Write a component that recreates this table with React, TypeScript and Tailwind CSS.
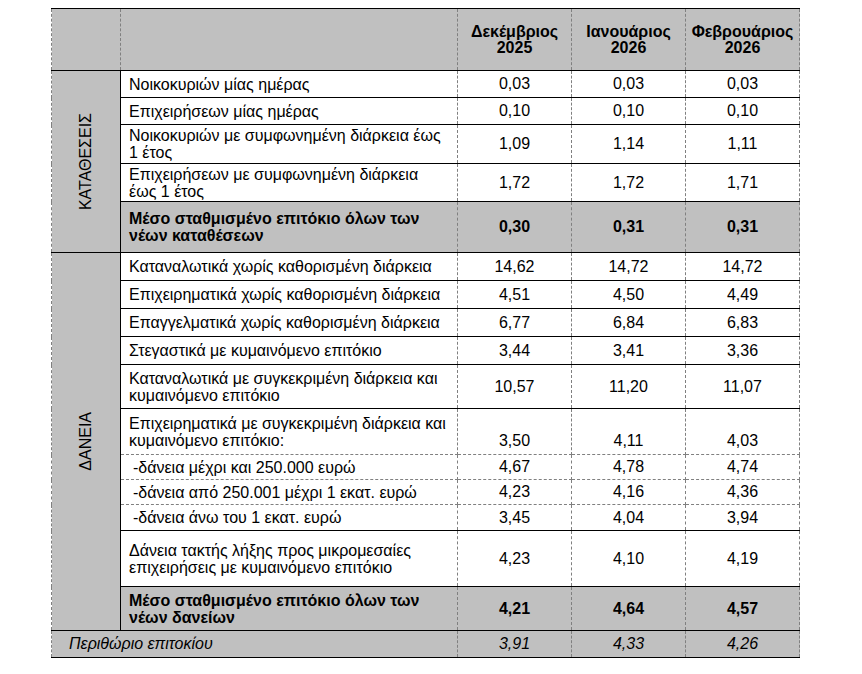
const font = { fontFamily: '"Liberation Sans", Arial, sans-serif' };

type Row = {
  label: string[];
  values: [string, string, string];
  h: number;
  kind?: "bold" | "sub" | "bottomVal";
  dashedTop?: boolean;
};

const deposits: Row[] = [
  { label: ["Νοικοκυριών μίας ημέρας"], values: ["0,03", "0,03", "0,03"], h: 27 },
  { label: ["Επιχειρήσεων μίας ημέρας"], values: ["0,10", "0,10", "0,10"], h: 27 },
  { label: ["Νοικοκυριών με συμφωνημένη διάρκεια έως", "1 έτος"], values: ["1,09", "1,14", "1,11"], h: 39 },
  { label: ["Επιχειρήσεων με συμφωνημένη διάρκεια", "έως 1 έτος"], values: ["1,72", "1,72", "1,71"], h: 38 },
  { label: ["Μέσο σταθμισμένο επιτόκιο όλων των", "νέων καταθέσεων"], values: ["0,30", "0,31", "0,31"], h: 51, kind: "bold" },
];

const loans: Row[] = [
  { label: ["Καταναλωτικά χωρίς καθορισμένη διάρκεια"], values: ["14,62", "14,72", "14,72"], h: 28 },
  { label: ["Επιχειρηματικά χωρίς καθορισμένη διάρκεια"], values: ["4,51", "4,50", "4,49"], h: 28 },
  { label: ["Επαγγελματικά χωρίς καθορισμένη διάρκεια"], values: ["6,77", "6,84", "6,83"], h: 28 },
  { label: ["Στεγαστικά με κυμαινόμενο επιτόκιο"], values: ["3,44", "3,41", "3,36"], h: 28 },
  { label: ["Καταναλωτικά με συγκεκριμένη διάρκεια και", "κυμαινόμενο επιτόκιο"], values: ["10,57", "11,20", "11,07"], h: 44 },
  { label: ["Επιχειρηματικά με συγκεκριμένη διάρκεια και", "κυμαινόμενο επιτόκιο:"], values: ["3,50", "4,11", "4,03"], h: 46, kind: "bottomVal" },
  { label: ["-δάνεια μέχρι και 250.000 ευρώ"], values: ["4,67", "4,78", "4,74"], h: 25, kind: "sub", dashedTop: true },
  { label: ["-δάνεια από 250.001 μέχρι 1 εκατ. ευρώ"], values: ["4,23", "4,16", "4,36"], h: 25, kind: "sub", dashedTop: true },
  { label: ["-δάνεια άνω του 1 εκατ. ευρώ"], values: ["3,45", "4,04", "3,94"], h: 26, kind: "sub", dashedTop: true },
  { label: ["Δάνεια τακτής λήξης προς μικρομεσαίες", "επιχειρήσεις με κυμαινόμενο επιτόκιο"], values: ["4,23", "4,10", "4,19"], h: 56 },
  { label: ["Μέσο σταθμισμένο επιτόκιο όλων των", "νέων δανείων"], values: ["4,21", "4,64", "4,57"], h: 44, kind: "bold" },
];

const cell = "border border-dashed border-[#808080] p-0";
const solidTop = "border-t-black [border-top-style:solid]";

function Side({ text, span }: { text: string; span: number }) {
  return (
    <td
      rowSpan={span}
      className={`${cell} ${solidTop} border-r-black [border-right-style:solid] bg-[#c0c0c0] align-middle`}
    >
      <div className="flex items-center justify-center">
        <span className="[writing-mode:vertical-rl] rotate-180 text-[16px]">{text}</span>
      </div>
    </td>
  );
}

function DataRow({ row, side }: { row: Row; side?: React.ReactNode }) {
  const bold = row.kind === "bold";
  const bg = bold ? "bg-[#c0c0c0]" : "bg-white";
  const top = row.dashedTop ? "" : solidTop;
  const valAlign = row.kind === "bottomVal" ? "align-bottom pb-[1px]" : "align-middle";
  return (
    <tr style={{ height: row.h }}>
      {side}
      <td
        className={`${cell} ${top} ${bg} align-middle leading-[17px] whitespace-nowrap ${bold ? "font-bold" : ""} ${
          row.kind === "sub" ? "pl-[12px] pr-2" : "px-2"
        }`}
      >
        {row.label.map((l, i) => (
          <div key={i}>{l}</div>
        ))}
      </td>
      {row.values.map((v, i) => (
        <td key={i} className={`${cell} ${top} ${bg} text-center ${valAlign} ${bold ? "font-bold" : ""}`}>
          {v}
        </td>
      ))}
    </tr>
  );
}

export default function App() {
  return (
    <div className="bg-white w-[862px] h-[674px] pt-[8px] pl-[51px] text-black text-[16px]" style={font}>
      <table className="table-fixed border-collapse w-[748px]">
        <colgroup>
          <col className="w-[69px]" />
          <col className="w-[337px]" />
          <col className="w-[114px]" />
          <col className="w-[114px]" />
          <col className="w-[114px]" />
        </colgroup>
        <tbody>
          <tr style={{ height: 62 }}>
            <td className={`${cell} ${solidTop} bg-[#c0c0c0]`} />
            <td className={`${cell} ${solidTop} bg-[#c0c0c0]`} />
            {[
              ["Δεκέμβριος", "2025"],
              ["Ιανουάριος", "2026"],
              ["Φεβρουάριος", "2026"],
            ].map(([m, y]) => (
              <td
                key={m}
                className={`${cell} ${solidTop} bg-[#c0c0c0] text-center align-middle font-bold leading-[16px] pt-[1px]`}
              >
                {m}
                <br />
                {y}
              </td>
            ))}
          </tr>
          {deposits.map((r, i) => (
            <DataRow
              key={r.label[0] + i}
              row={r}
              side={i === 0 ? <Side text="ΚΑΤΑΘΕΣΕΙΣ" span={deposits.length} /> : undefined}
            />
          ))}
          {loans.map((r, i) => (
            <DataRow
              key={r.label[0] + i}
              row={r}
              side={i === 0 ? <Side text="ΔΑΝΕΙΑ" span={loans.length} /> : undefined}
            />
          ))}
          <tr style={{ height: 27 }} className="italic">
            <td
              colSpan={2}
              className={`${cell} ${solidTop} border-b-black [border-bottom-style:solid] bg-[#c0c0c0] pl-[17px] align-middle`}
            >
              Περιθώριο επιτοκίου
            </td>
            {["3,91", "4,33", "4,26"].map((v) => (
              <td
                key={v}
                className={`${cell} ${solidTop} border-b-black [border-bottom-style:solid] bg-[#c0c0c0] text-center align-middle`}
              >
                {v}
              </td>
            ))}
          </tr>
        </tbody>
      </table>
    </div>
  );
}
